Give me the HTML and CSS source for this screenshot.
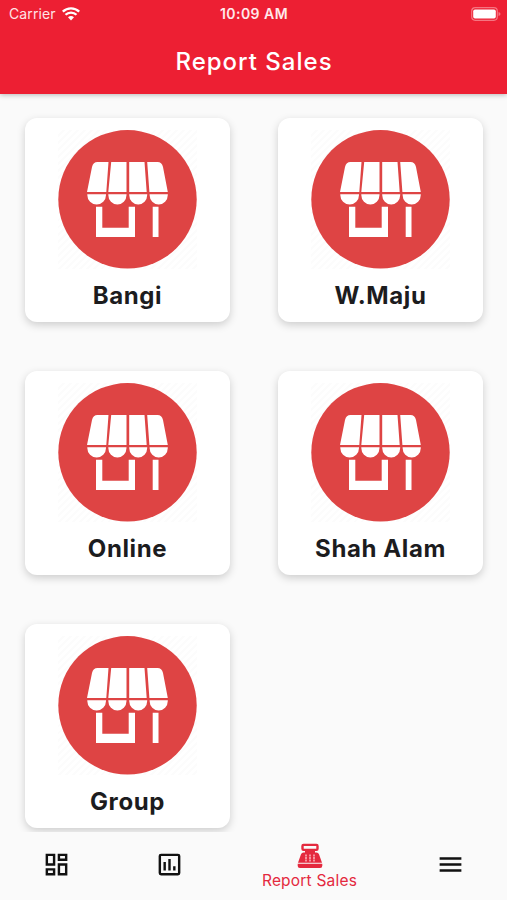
FILE: index.html
```html
<!DOCTYPE html>
<html lang="en">
<head>
<meta charset="utf-8">
<title>Report Sales</title>
<link rel="stylesheet" href="styles.css">
</head>
<body>
<svg class="defs" aria-hidden="true">
  <symbol id="shop" viewBox="0 0 139 139">
    <circle class="disc" cx="69.5" cy="69.3" r="69.2"/>
    <path d="M39.500 32H50.500L48.300 62H29L34 37Q35.200 32 39.500 32ZM53.200 32H68.500V62H50.300ZM71.200 32H86.500L88.700 62H71.200ZM89.200 32H99.500Q103.800 32 105 37L109.800 62H91.400Z"/>
    <path d="M29.300 64.200H48V65A9.350 9.500 0 0 1 29.300 65ZM50.300 64.200H68.500V65A9.100 9.500 0 0 1 50.300 65ZM71.200 64.200H89.200V65A9 9.500 0 0 1 71.200 65ZM91.600 64.200H109.800V65A9.100 9.500 0 0 1 91.600 65Z"/>
    <path d="M38 76.700H44.300V97.700H70.700V76.700H77V107H38ZM94.700 76.700H100.500V107H94.700Z"/>
  </symbol>
</svg>
<div class="app">
  <header class="header">
    <div class="status">
      <div class="carrier"><span>Carrier</span>
        <svg class="wifi" viewBox="0 0 18 14"><path d="M9 13.500 6 10.300A4.400 4.400 0 0 1 12 10.300Z"/><path class="arc" d="M.8 4.700A11.800 11.800 0 0 1 17.200 4.700M3.500 7.800A7.800 7.800 0 0 1 14.500 7.800"/></svg>
      </div>
      <div class="clock">10:09 AM</div>
      <svg class="battery" viewBox="0 0 30 14"><rect class="shell" x=".7" y=".7" width="25.600" height="12.600" rx="3.500"/><rect x="2.200" y="2.500" width="22.600" height="9" rx="1.800"/><path class="tip" d="M27.500 5Q29.500 5.500 29.500 7T27.500 9Z"/></svg>
    </div>
    <h1 class="title">Report Sales</h1>
  </header>
  <main class="grid">
    <article class="card"><svg class="shop"><use href="#shop"/></svg><h2 class="name">Bangi</h2></article>
    <article class="card"><svg class="shop"><use href="#shop"/></svg><h2 class="name">W.Maju</h2></article>
    <article class="card"><svg class="shop"><use href="#shop"/></svg><h2 class="name">Online</h2></article>
    <article class="card"><svg class="shop"><use href="#shop"/></svg><h2 class="name">Shah Alam</h2></article>
    <article class="card"><svg class="shop"><use href="#shop"/></svg><h2 class="name">Group</h2></article>
  </main>
  <nav class="nav">
    <a class="tab"><svg class="icon" viewBox="0 0 24 24"><path d="M19 5v2h-4V5h4M9 5v6H5V5h4m10 8v6h-4v-6h4M9 17v2H5v-2h4M21 3h-8v6h8V3zM11 3H3v10h8V3zm10 8h-8v10h8V11zm-10 4H3v6h8v-6z"/></svg></a>
    <a class="tab"><svg class="icon" viewBox="0 0 24 24"><path d="M19 3H5a2 2 0 0 0-2 2v14a2 2 0 0 0 2 2h14a2 2 0 0 0 2-2V5a2 2 0 0 0-2-2zm0 16H5V5h14v14zM7 10h2v7H7zm4-2.500h2V17h-2zm4 6h2V17h-2z"/></svg></a>
    <a class="tab tab-active">
      <svg class="register" viewBox="0 0 26 26"><path fill-rule="evenodd" d="M6.500 .8H19.500Q21.700 .8 21.700 3V5.800Q21.700 8 19.500 8H18V9.500H19.500Q21.300 9.500 22 11.300L25 19.800H1L4 11.300Q4.700 9.500 6.500 9.500H8V8H6.500Q4.300 8 4.300 5.800V3Q4.300 .8 6.500 .8ZM6.700 3V5.800H19.300V3Z"/><path d="M.7 20.700H25.300V22.800Q25.300 25 23.100 25H2.900Q.7 25 .7 22.800Z"/><path class="keys" d="M9 11.500V18.500M13 11.500V18.500M17 11.500V18.500"/></svg>
      <span class="label">Report Sales</span>
    </a>
    <a class="tab"><svg class="icon menu" viewBox="0 0 24 24"><path d="M3 6h18v2H3zm0 5h18v2H3zm0 5h18v2H3z"/></svg></a>
  </nav>
</div>
</body>
</html>
```
FILE: styles.css
```css
* { box-sizing: border-box; }
body { margin: 0; font-family: Inter, "Liberation Sans", sans-serif; }
.defs { display: block; width: 0; height: 0; }
.app { display: flex; flex-direction: column; height: 900px; overflow: hidden; background: #fafafa; }
.header { flex: none; height: 94px; background: #ed1f33; color: #fff; box-shadow: 0 1px 5px rgba(0,0,0,.27); z-index: 1; }
.status { display: grid; grid-template-columns: 1fr auto 1fr; align-items: center; height: 27px; padding: 0 6px 0 9px; }
.carrier { display: flex; align-items: center; gap: 6px; font-size: 14px; color: #ffe3e6; letter-spacing: .1px; }
.clock { margin-right: 2px; font-size: 14px; font-weight: 600; color: #ffe9eb; letter-spacing: .45px; }
.wifi { width: 18px; height: 14px; fill: #fff; }
.arc { fill: none; stroke: #fff; stroke-width: 2.300; }
.battery { width: 30px; height: 14px; justify-self: end; fill: #fff; }
.shell { fill: none; stroke: #f57581; stroke-width: 1.200; }
.tip { fill: #f57581; }
.title { margin: 17px 0 0; padding-left: 1px; text-align: center; font-size: 24px; line-height: 36px; font-weight: 500; letter-spacing: 1px; }
.grid { flex: 1; min-height: 0; overflow: hidden; display: grid; grid-template-columns: 205px 205px; grid-auto-rows: 204px; align-content: start; gap: 49px 48px; padding: 24px 25px 0; }
.card { display: flex; flex-direction: column; align-items: center; padding-top: 12px; border-radius: 12px; background: #fff; box-shadow: 0 3px 8px rgba(0,0,0,.18); }
.shop { width: 139px; height: 139px; fill: #fff; background: repeating-linear-gradient(135deg, #fff 0 3px, #fcfcfc 3px 5px); }
.disc { fill: #de4444; }
.name { margin: 10px 0 0; font-size: 24px; line-height: 34px; font-weight: 650; color: #1c1c1e; letter-spacing: .6px; }
.nav { flex: none; display: grid; grid-template-columns: 113px 112px 169px 113px; height: 68px; background: #fafafa; }
.tab { display: flex; flex-direction: column; align-items: center; padding-top: 18px; color: #111; }
.icon { width: 29px; height: 29px; fill: currentColor; }
.tab-active { padding-top: 11px; color: #e4293e; }
.register { width: 26px; height: 26px; fill: currentColor; }
.keys { fill: none; stroke: #fbb5bd; stroke-width: 1.500; stroke-dasharray: 2 .5; }
.label { margin-top: 2px; font-size: 15.500px; line-height: 20px; letter-spacing: .2px; }
```
